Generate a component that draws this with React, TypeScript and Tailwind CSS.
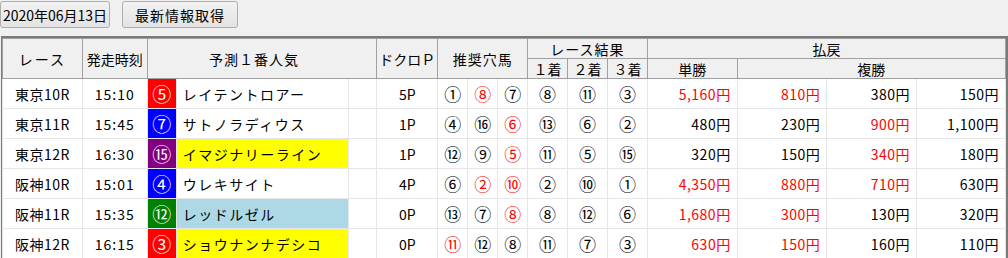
import React from "react";

type Race = {
  race: string;
  time: string;
  num: string;
  badge: string;
  name: string;
  nameBg: string;
  skull: string;
  picks: [string, boolean][];
  result: string[];
  win: [string, boolean];
  place: [string, boolean][];
};

const races: Race[] = [
  {
    race: "東京10R", time: "15:10", num: "⑤", badge: "bg-[#ff0000]", name: "レイテントロアー", nameBg: "bg-white", skull: "5P",
    picks: [["①", false], ["⑧", true], ["⑦", false]], result: ["⑧", "⑪", "③"],
    win: ["5,160円", true], place: [["810円", true], ["380円", false], ["150円", false]],
  },
  {
    race: "東京11R", time: "15:45", num: "⑦", badge: "bg-[#0000ff]", name: "サトノラディウス", nameBg: "bg-white", skull: "1P",
    picks: [["④", false], ["⑯", false], ["⑥", true]], result: ["⑬", "⑥", "②"],
    win: ["480円", false], place: [["230円", false], ["900円", true], ["1,100円", false]],
  },
  {
    race: "東京12R", time: "16:30", num: "⑮", badge: "bg-[#800080]", name: "イマジナリーライン", nameBg: "bg-[#ffff00]", skull: "1P",
    picks: [["⑫", false], ["⑨", false], ["⑤", true]], result: ["⑪", "⑤", "⑮"],
    win: ["320円", false], place: [["150円", false], ["340円", true], ["180円", false]],
  },
  {
    race: "阪神10R", time: "15:01", num: "④", badge: "bg-[#0000ff]", name: "ウレキサイト", nameBg: "bg-white", skull: "4P",
    picks: [["⑥", false], ["②", true], ["⑩", true]], result: ["②", "⑩", "①"],
    win: ["4,350円", true], place: [["880円", true], ["710円", true], ["630円", false]],
  },
  {
    race: "阪神11R", time: "15:35", num: "⑫", badge: "bg-[#008000]", name: "レッドルゼル", nameBg: "bg-[#add8e6]", skull: "0P",
    picks: [["⑬", false], ["⑦", false], ["⑧", true]], result: ["⑧", "⑫", "⑥"],
    win: ["1,680円", true], place: [["300円", true], ["130円", false], ["320円", false]],
  },
  {
    race: "阪神12R", time: "16:15", num: "③", badge: "bg-[#ff0000]", name: "ショウナンナデシコ", nameBg: "bg-[#ffff00]", skull: "0P",
    picks: [["⑪", true], ["⑫", false], ["⑧", false]], result: ["⑪", "⑦", "③"],
    win: ["630円", true], place: [["150円", true], ["160円", false], ["110円", false]],
  },
];

const widths = [80, 65, 29, 172, 29, 61, 30, 30, 30, 40, 40, 40, 90, 90, 90, 89];

const th = "border border-[#a0a0a0] bg-[#f0f0f0] font-normal p-0 text-center whitespace-nowrap";
const td = "border border-[#e6e6e6] p-0 whitespace-nowrap";

export default function App() {
  return (
    <div
      className="w-[1008px] h-[258px] overflow-hidden bg-[#f0f0f0] text-[14px] leading-none text-black"
      style={{ fontFamily: '"Noto Sans CJK JP", "Noto Sans", sans-serif' }}
    >
      <div className="flex h-[36px] items-start gap-3 pt-[1px]">
        <div className="flex h-[27px] w-[110px] items-center justify-center whitespace-nowrap rounded-[3px] border border-[#adadad] bg-gradient-to-b from-[#f2f2f2] to-[#e3e3e3]">
          2020年06月13日
        </div>
        <button className="flex h-[27px] w-[116px] items-center justify-center whitespace-nowrap rounded-[3px] border border-[#adadad] bg-gradient-to-b from-[#f2f2f2] to-[#e3e3e3] tracking-[1px]">
          最新情報取得
        </button>
      </div>

      <div className="ml-[1px] w-[1007px] border-t-2 border-r-2 border-l border-[#7a7a7a]">
        <table className="table-fixed border-collapse bg-white">
          <colgroup>
            {widths.map((w, i) => (
              <col key={i} style={{ width: w }} />
            ))}
          </colgroup>
          <thead>
            <tr className="h-[20px]">
              <th rowSpan={2} className={th + " tracking-[2px]"}>レース</th>
              <th rowSpan={2} className={th}>発走時刻</th>
              <th rowSpan={2} colSpan={3} className={th + " pr-4 tracking-[1px]"}>予測１番人気</th>
              <th rowSpan={2} className={th}>ドクロＰ</th>
              <th rowSpan={2} colSpan={3} className={th + " tracking-[1px]"}>推奨穴馬</th>
              <th colSpan={3} className={th + " tracking-[1px]"}>レース結果</th>
              <th colSpan={4} className={th}>払戻</th>
            </tr>
            <tr className="h-[20px]">
              <th className={th}>１着</th>
              <th className={th}>２着</th>
              <th className={th}>３着</th>
              <th className={th}>単勝</th>
              <th colSpan={3} className={th}>複勝</th>
            </tr>
          </thead>
          <tbody>
            {races.map((r) => (
              <tr key={r.race} className="h-[30px]">
                <td className={td + " text-center tracking-[0.5px]"}>{r.race}</td>
                <td className={td + " text-center tracking-[1px]"}>{r.time}</td>
                <td className={td + " text-center text-white text-[19px] " + r.badge}>{r.num}</td>
                <td className={td + " pl-[6px] tracking-[1.5px] " + r.nameBg}>{r.name}</td>
                <td className={td} />
                <td className={td + " text-center"}>{r.skull}</td>
                {r.picks.map(([n, hit], i) => (
                  <td key={i} className={td + " text-center text-[17px] " + (hit ? "text-[#ff0000]" : "")}>{n}</td>
                ))}
                {r.result.map((n, i) => (
                  <td key={i} className={td + " text-center text-[17px]"}>{n}</td>
                ))}
                <td className={td + " pr-[6px] text-right tracking-[0.5px] " + (r.win[1] ? "text-[#ff0000]" : "")}>{r.win[0]}</td>
                {r.place.map(([p, hit], i) => (
                  <td key={i} className={td + " pr-[6px] text-right tracking-[0.5px] " + (hit ? "text-[#ff0000]" : "")}>{p}</td>
                ))}
              </tr>
            ))}
          </tbody>
        </table>
      </div>
    </div>
  );
}
